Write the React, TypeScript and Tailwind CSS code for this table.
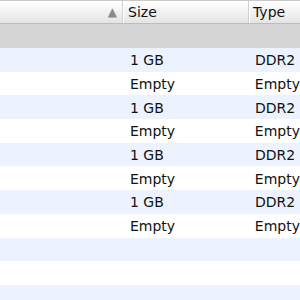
const rows = [
  { size: "1 GB", type: "DDR2" },
  { size: "Empty", type: "Empty" },
  { size: "1 GB", type: "DDR2" },
  { size: "Empty", type: "Empty" },
  { size: "1 GB", type: "DDR2" },
  { size: "Empty", type: "Empty" },
  { size: "1 GB", type: "DDR2" },
  { size: "Empty", type: "Empty" },
  { size: "", type: "" },
  { size: "", type: "" },
  { size: "", type: "" },
];

export default function App() {
  return (
    <div
      className="w-[300px] h-[300px] overflow-hidden bg-white text-[14px] text-[#111]"
      style={{ fontFamily: '"DejaVu Sans", "Liberation Sans", sans-serif' }}
    >
      {/* Column header */}
      <div className="flex h-[24px] border-t border-t-[#c9c9c9] border-b border-b-[#bdbdbd] bg-gradient-to-b from-[#ffffff] via-[#f2f2f2] to-[#e4e4e4]">
        <div className="w-[123px] flex items-center justify-end pr-[5px] border-r border-r-[#cfcfcf]">
          <span className="text-[12px] text-[#8a8a8a] leading-none">▲</span>
        </div>
        <div className="w-[126px] flex items-center pl-[4px] border-l border-l-white border-r border-r-[#cfcfcf]">
          Size
        </div>
        <div className="flex-1 flex items-center pl-[3px] border-l border-l-white">Type</div>
      </div>

      {/* Group band */}
      <div className="h-[24px] bg-[#d5d5d5]" />

      {rows.map((r, i) => (
        <div
          key={i}
          className={`flex items-center h-[23.7px] ${i % 2 === 0 ? "bg-[#edf3fe]" : "bg-white"}`}
        >
          <div className="w-[130px]" />
          <div className="w-[125px] whitespace-nowrap pt-[2px]">{r.size}</div>
          <div className="flex-1 whitespace-nowrap pt-[2px]">{r.type}</div>
        </div>
      ))}
    </div>
  );
}
